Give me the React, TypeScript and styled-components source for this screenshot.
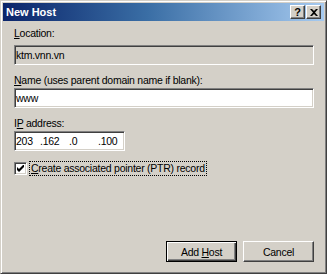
import React from "react";
import styled, { createGlobalStyle } from "styled-components";

const GlobalStyle = createGlobalStyle`
  html, body {
    margin: 0;
    padding: 0;
    background: #d4d0c8;
  }
  body {
    font-family: Tahoma, "Liberation Sans", Arial, sans-serif;
    font-size: 10.5px;
    letter-spacing: -0.25px;
    color: #000;
  }
`;

const Window = styled.div`
  width: 327px;
  height: 274px;
  box-sizing: border-box;
  background: #d4d0c8;
  border: 1px solid;
  border-color: #d4d0c8 #404040 #404040 #d4d0c8;
  box-shadow: inset 1px 1px #ffffff, inset -1px -1px #808080;
  padding: 2px;
  display: flex;
  flex-direction: column;
`;

const TitleBar = styled.div`
  height: 18px;
  display: flex;
  align-items: center;
  justify-content: space-between;
  padding: 0 3px 0 3px;
  background: linear-gradient(to right, #0a246a 0%, #3a6ea5 45%, #a6caf0 100%);
`;

const Title = styled.span`
  color: #fff;
  font-weight: bold;
  font-size: 11px;
  letter-spacing: 0;
`;

const Controls = styled.div`
  display: flex;
  gap: 1px;
`;

const CaptionButton = styled.div`
  width: 15px;
  height: 14px;
  box-sizing: border-box;
  background: #d4d0c8;
  border: 1px solid;
  border-color: #ffffff #404040 #404040 #ffffff;
  box-shadow: inset -1px -1px #808080;
  display: flex;
  align-items: center;
  justify-content: center;
  font-weight: bold;
  font-size: 11px;
  line-height: 1;
`;

const Body = styled.div`
  flex: 1;
  display: flex;
  flex-direction: column;
  padding: 6px 10px 0 11px;
`;

const Label = styled.div<{ $gap?: number; $after?: number }>`
  height: 13px;
  line-height: 13px;
  margin-top: ${(p) => p.$gap ?? 0}px;
  margin-bottom: ${(p) => p.$after ?? 1}px;
`;

const Key = styled.span`
  text-decoration: underline;
`;

const Field = styled.div<{ $disabled?: boolean; $width?: number }>`
  height: 20px;
  box-sizing: border-box;
  width: ${(p) => (p.$width ? `${p.$width}px` : "100%")};
  background: ${(p) => (p.$disabled ? "#d4d0c8" : "#ffffff")};
  border: 1px solid;
  border-color: #808080 #ffffff #ffffff #808080;
  box-shadow: inset 1px 1px #404040, inset -1px -1px #d4d0c8;
  padding: 0 1px;
  display: flex;
  align-items: center;
`;

const Octet = styled.span<{ $w: number }>`
  width: ${(p) => p.$w}px;
  flex: none;
`;

const CheckRow = styled.div`
  display: flex;
  align-items: center;
  margin-top: 10px;
`;

const CheckBox = styled.div`
  width: 13px;
  height: 13px;
  box-sizing: border-box;
  background: #fff;
  border: 1px solid;
  border-color: #808080 #ffffff #ffffff #808080;
  box-shadow: inset 1px 1px #404040, inset -1px -1px #d4d0c8;
  display: flex;
  align-items: center;
  justify-content: center;
`;

const CheckLabel = styled.span`
  margin-left: 2px;
  padding: 0 1px;
  border: 1px dotted #000;
  line-height: 13px;
`;

const Footer = styled.div`
  margin-top: auto;
  display: flex;
  justify-content: flex-end;
  gap: 6px;
  padding-bottom: 9px;
`;

const Button = styled.div<{ $default?: boolean }>`
  width: 71px;
  height: 21px;
  box-sizing: border-box;
  display: flex;
  align-items: center;
  justify-content: center;
  background: #d4d0c8;
  border: 1px solid;
  border-color: ${(p) =>
    p.$default ? "#000" : "#ffffff #404040 #404040 #ffffff"};
  box-shadow: ${(p) =>
    p.$default
      ? "inset 1px 1px #ffffff, inset -1px -1px #404040, inset -2px -2px #808080"
      : "inset -1px -1px #808080"};
`;

export default function App() {
  return (
    <>
      <GlobalStyle />
      <Window>
        <TitleBar>
          <Title>New Host</Title>
          <Controls>
            <CaptionButton>?</CaptionButton>
            <CaptionButton>
              <svg width="8" height="7" viewBox="0 0 8 7">
                <path
                  d="M0 0h2l2 2 2-2h2L5 3.5 8 7H6L4 5 2 7H0l3-3.5z"
                  fill="#000"
                />
              </svg>
            </CaptionButton>
          </Controls>
        </TitleBar>
        <Body>
          <Label $after={5}>
            <Key>L</Key>ocation:
          </Label>
          <Field $disabled>ktm.vnn.vn</Field>
          <Label $gap={9}>
            <Key>N</Key>ame (uses parent domain name if blank):
          </Label>
          <Field>www</Field>
          <Label $gap={9}>
            I<Key>P</Key> address:
          </Label>
          <Field $width={111}>
            <Octet $w={24}>203</Octet>
            <Octet $w={29}>.162</Octet>
            <Octet $w={29}>.0</Octet>
            <Octet $w={24}>.100</Octet>
          </Field>
          <CheckRow>
            <CheckBox>
              <svg width="7" height="7" viewBox="0 0 7 7">
                <path d="M0 2v3l2 2 5-5V-1L2 4z" fill="#000" />
              </svg>
            </CheckBox>
            <CheckLabel>
              <Key>C</Key>reate associated pointer (PTR) record
            </CheckLabel>
          </CheckRow>
          <Footer>
            <Button $default>
              <span>
                Add <Key>H</Key>ost
              </span>
            </Button>
            <Button>Cancel</Button>
          </Footer>
        </Body>
      </Window>
    </>
  );
}
